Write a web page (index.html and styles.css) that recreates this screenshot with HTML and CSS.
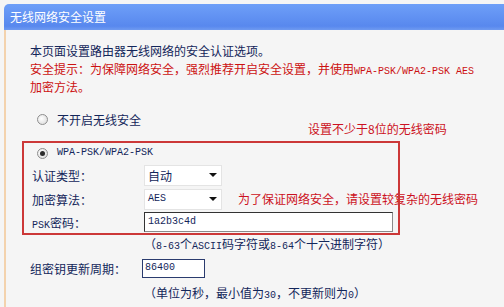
FILE: index.html
```html
<!DOCTYPE html>
<html lang="zh-CN">
<head>
  <meta charset="UTF-8">
  <title>无线网络安全设置</title>
  <link rel="stylesheet" href="styles.css">
</head>
<body>
  <div class="page">
    <div class="title">无线网络安全设置</div>
    <div class="panel">
      <div class="intro">
        <p>本页面设置路由器无线网络的安全认证选项。</p>
        <p class="warn">安全提示：为保障网络安全，强烈推荐开启安全设置，并使用<span class="en">WPA-PSK/WPA2-PSK AES</span><br>加密方法。</p>
      </div>

      <div class="option">
        <span class="radio"></span>
        <span>不开启无线安全</span>
      </div>

      <div class="box">
        <div class="option inbox">
          <span class="radio checked"></span>
          <span class="en">WPA-PSK/WPA2-PSK</span>
        </div>
        <div class="field">
          <span class="label">认证类型：</span>
          <div class="select"><span>自动</span><span class="arrow"></span></div>
        </div>
        <div class="field">
          <span class="label">加密算法：</span>
          <div class="select"><span class="en">AES</span><span class="arrow"></span></div>
        </div>
        <div class="field last">
          <span class="label"><span class="en">PSK</span>密码：</span>
          <div class="input psk"><span class="en">1a2b3c4d</span></div>
        </div>
      </div>

      <div class="hint">（<span class="en">8-63</span>个<span class="en">ASCII</span>码字符或<span class="en">8-64</span>个十六进制字符）</div>

      <div class="field group">
        <span class="label">组密钥更新周期：</span>
        <div class="input period"><span class="en">86400</span></div>
      </div>

      <div class="hint second">（单位为秒，最小值为<span class="en">30</span>，不更新则为<span class="en">0</span>）</div>

      <div class="note note-one">设置不少于8位的无线密码</div>
      <div class="note note-two">为了保证网络安全，请设置较复杂的无线密码</div>
    </div>
  </div>
</body>
</html>
```

FILE: styles.css
```css
body {
  margin: 0;
  background: #f5f5f5;
  font-family: "Noto Sans CJK SC", sans-serif;
  font-size: 12px;
  color: #13265a;
}

.page {
  padding: 4px 0 0 4px;
}

.title {
  height: 26px;
  line-height: 26px;
  padding-left: 6px;
  color: #fff;
  background: linear-gradient(#6e9ff8, #5888ee 85%, #6f9af0);
  border-radius: 5px 0 0 0;
}

.panel {
  position: relative;
  border-left: 2px solid #f3d2ad;
  padding: 12px 0 10px 24px;
}

.intro p {
  margin: 0;
  height: 18px;
  line-height: 18px;
}

.intro p.warn {
  height: 36px;
}

.warn {
  color: #cc1111;
}

.en {
  font-family: "Liberation Mono", monospace;
  font-size: 10px;
  line-height: 1;
}

.option {
  display: flex;
  align-items: center;
  gap: 9px;
  height: 20px;
  margin-top: 13px;
  padding-left: 7px;
}

.option.inbox {
  margin-top: 0;
  padding-left: 5px;
}

.radio {
  width: 11px;
  height: 11px;
  box-sizing: border-box;
  border-radius: 50%;
  border: 1px solid #8e8e8e;
  background: radial-gradient(circle at 40% 40%, #ffffff, #d6d6d6);
  position: relative;
}

.radio.checked::after {
  content: "";
  position: absolute;
  left: 2px;
  top: 2px;
  width: 5px;
  height: 5px;
  border-radius: 50%;
  background: #2c2c2c;
}

.box {
  position: relative;
  z-index: 1;
  width: 378px;
  box-sizing: border-box;
  margin: 12px 0 0 -8px;
  border: 2px solid #cc3838;
  padding-left: 8px;
}

.field {
  display: flex;
  align-items: center;
  height: 24px;
}

.field.last {
  height: 22px;
}

.label {
  width: 112px;
}

.select {
  width: 78px;
  height: 21px;
  box-sizing: border-box;
  background: #fff;
  border: 1px solid #e4e4e4;
  display: flex;
  align-items: center;
  justify-content: space-between;
  padding: 0 4px 0 3px;
}

.arrow {
  width: 0;
  height: 0;
  border-left: 4px solid transparent;
  border-right: 4px solid transparent;
  border-top: 4px solid #111;
}

.input {
  height: 20px;
  box-sizing: border-box;
  background: #fff;
  border: 1px solid #8a8a8a;
  border-top-color: #333;
  border-left-color: #333;
  display: flex;
  align-items: center;
  padding-left: 3px;
}

.input.psk {
  width: 249px;
}

.input.period {
  width: 63px;
  height: 19px;
  border-color: #2a3b6e;
  padding-left: 2px;
}

.hint {
  margin-left: 114px;
  height: 18px;
  line-height: 18px;
}

.field.group {
  margin-top: 5px;
  height: 20px;
}

.hint.second {
  margin-top: 6px;
}

.note {
  position: absolute;
  line-height: 18px;
  color: #cc1122;
  white-space: nowrap;
}

.note-one {
  left: 302px;
  top: 90px;
}

.note-two {
  left: 232px;
  top: 160px;
}
```
